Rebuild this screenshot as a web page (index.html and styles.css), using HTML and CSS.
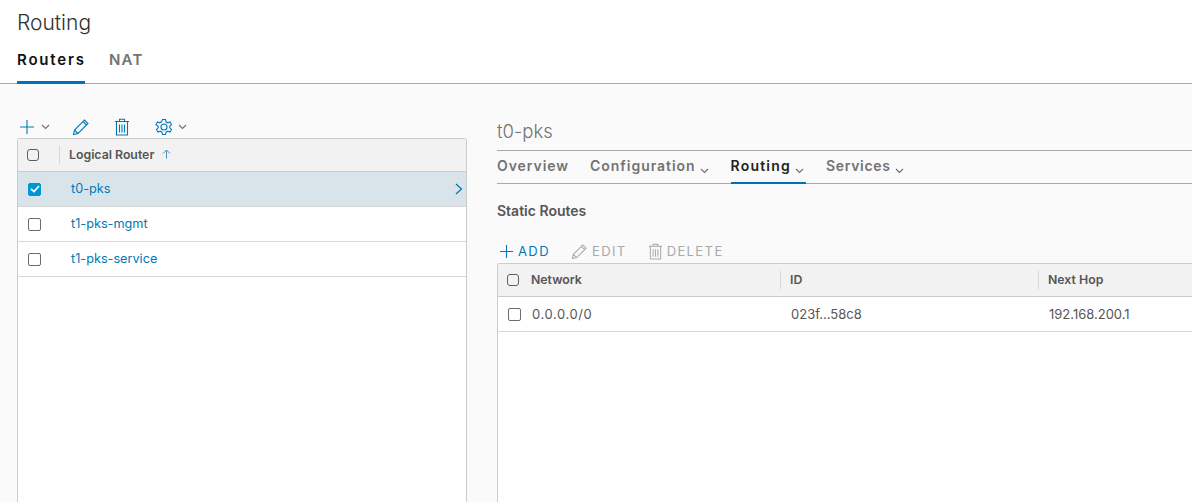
FILE: index.html
```html
<!DOCTYPE html>
<html lang="en">
<head>
    <meta charset="UTF-8">
    <title>Routing</title>
    <link rel="stylesheet" href="styles.css">
</head>
<body>

<header class="page-head">
    <h1>Routing</h1>
    <nav class="main-tabs">
        <a class="main-tab active">Routers</a>
        <a class="main-tab">NAT</a>
    </nav>
</header>

<main class="content">
    <section class="left">
        <div class="icon-bar">
            <svg class="ic-plus" width="16" height="16" viewBox="0 0 16 16"><path d="M8 1v14M1 8h14"/></svg>
            <svg class="chev" width="9" height="6" viewBox="0 0 9 6"><path d="M1 1l3.500 3.500L8 1"/></svg>
            <svg class="ic ic-pencil" width="18" height="18" viewBox="0 0 18 18"><path d="M1.500 16.500l1-4.500L12.500 2l3.500 3.500L6 15.500zM2.500 12l3.500 3.500M11 3.500l3.500 3.500"/></svg>
            <svg class="ic ic-trash" width="16" height="18" viewBox="0 0 16 18"><path d="M1 3.500h14M5.500 3V1.200h5V3M2.500 3.500V17h11V3.500M5.500 6.500v8M8 6.500v8M10.500 6.500v8"/></svg>
            <svg class="ic ic-gear" width="18" height="18" viewBox="0 0 18 18"><circle cx="9" cy="9" r="3"/><path d="M7.500 1.500h3l.5 2.300 1.800 1 2.200-.8 1.500 2.600-1.700 1.600v1.600l1.700 1.600-1.500 2.600-2.200-.8-1.800 1-.5 2.300h-3l-.5-2.300-1.800-1-2.200.8-1.500-2.600 1.700-1.600V8.200L1 6.600l1.500-2.600 2.200.8 1.800-1z"/></svg>
            <svg class="chev" width="9" height="6" viewBox="0 0 9 6"><path d="M1 1l3.500 3.500L8 1"/></svg>
        </div>
        <div class="grid router-grid">
            <div class="grid-head">
                <span class="box head-box"></span>
                <span class="col-title first-title">Logical Router <svg class="sort" width="9" height="10" viewBox="0 0 9 10"><path d="M4.500 9.500V1M1 4.500L4.500 1 8 4.500"/></svg></span>
            </div>
            <div class="router-row selected">
                <span class="box checked"><svg width="10" height="8" viewBox="0 0 10 8"><path d="M1 4l3 2.500L9 1"/></svg></span>
                <a class="router-name">t0-pks</a>
                <svg class="row-arrow" width="8" height="12" viewBox="0 0 8 12"><path d="M1 1l5.500 5L1 11"/></svg>
            </div>
            <div class="router-row">
                <span class="box"></span>
                <a class="router-name">t1-pks-mgmt</a>
            </div>
            <div class="router-row">
                <span class="box"></span>
                <a class="router-name">t1-pks-service</a>
            </div>
        </div>
    </section>

    <section class="right">
        <h2 class="detail-title">t0-pks</h2>
        <nav class="sub-tabs">
            <a class="sub-tab">Overview</a>
            <a class="sub-tab">Configuration<svg class="chev" width="9" height="6" viewBox="0 0 9 6"><path d="M1 1l3.500 3.500L8 1"/></svg></a>
            <a class="sub-tab active">Routing<svg class="chev" width="9" height="6" viewBox="0 0 9 6"><path d="M1 1l3.500 3.500L8 1"/></svg></a>
            <a class="sub-tab services">Services<svg class="chev" width="9" height="6" viewBox="0 0 9 6"><path d="M1 1l3.500 3.500L8 1"/></svg></a>
        </nav>
        <h3 class="section-title">Static Routes</h3>
        <div class="action-bar">
            <a class="action add"><svg width="15" height="15" viewBox="0 0 15 15"><path d="M7.500 1v13M1 7.500h13"/></svg>ADD</a>
            <a class="action off"><svg width="17" height="17" viewBox="0 0 18 18"><path d="M1.500 16.500l1-4.500L12.500 2l3.500 3.500L6 15.500zM2.500 12l3.500 3.500M11 3.500l3.500 3.500"/></svg>EDIT</a>
            <a class="action off"><svg width="15" height="17" viewBox="0 0 16 18"><path d="M1 3.500h14M5.500 3V1.200h5V3M2.500 3.500V17h11V3.500M5.500 6.500v8M8 6.500v8M10.500 6.500v8"/></svg>DELETE</a>
        </div>
        <div class="grid route-grid">
            <div class="grid-head route-cols">
                <span class="cell-check"><span class="box head-box"></span></span>
                <span class="col-title">Network</span>
                <span class="col-title sep">ID</span>
                <span class="col-title sep">Next Hop</span>
            </div>
            <div class="route-row route-cols">
                <span class="cell-check"><span class="box"></span></span>
                <span class="route-cell network-cell">0.0.0.0/0</span>
                <span class="route-cell">023f...58c8</span>
                <span class="route-cell">192.168.200.1</span>
            </div>
        </div>
    </section>
</main>

</body>
</html>
```

FILE: styles.css
```css
html, body {
    height: 100%;
}
body {
    margin: 0;
    font-family: Inter, "Open Sans", sans-serif;
    background-color: #fafafa;
    color: #565656;
    overflow: hidden;
    display: flex;
    flex-direction: column;
}
svg {
    fill: none;
    display: block;
    flex: none;
}

/* page header */
.page-head {
    background-color: #fff;
    border-bottom: 1px solid #a9a9a9;
    padding: 11px 0 0 17px;
    height: 72px;
    flex: none;
}
h1 {
    margin: 0;
    font-size: 21px;
    line-height: 24px;
    font-weight: 300;
    color: #313131;
}
.main-tabs {
    display: flex;
    gap: 24px;
    margin-top: 1px;
}
.main-tab {
    font-size: 15px;
    line-height: 24px;
    font-weight: 600;
    letter-spacing: 1.200px;
    color: #737373;
    height: 33px;
    padding-top: 12px;
}
.main-tab.active {
    color: #111;
    border-bottom: 3px solid #0072bb;
    letter-spacing: 1.800px;
    width: 68px;
}

/* layout */
.content {
    flex: 1;
    min-height: 0;
    display: flex;
    padding-left: 17px;
}
.left {
    width: 450px;
    flex: none;
    margin-right: 30px;
    display: flex;
    flex-direction: column;
}
.right {
    flex: 1;
    min-width: 0;
    display: flex;
    flex-direction: column;
}

/* icon toolbar */
.icon-bar {
    display: flex;
    align-items: center;
    height: 18px;
    margin-top: 34px;
    margin-bottom: 2px;
    padding-left: 2px;
}
.icon-bar path, .icon-bar circle {
    stroke: #0079b8;
    stroke-width: 1.100;
}
.ic-plus {
    margin-right: 6px;
}
.icon-bar .chev {
    margin-right: 22px;
}
.ic-pencil {
    margin-right: 24px;
}
.ic-trash {
    margin-right: 25px;
}
.ic-gear {
    margin-right: 5px;
}
.chev path, .icon-bar .chev path {
    stroke: #6e6e6e;
    stroke-width: 1.100;
}

/* grids */
.grid {
    border: 1px solid #ccc;
    border-bottom: 0;
    background-color: #fff;
    flex: 1;
    border-radius: 3px 3px 0 0;
}
.route-grid {
    border-right: 0;
    border-radius: 3px 0 0 0;
}
.grid-head {
    height: 32px;
    background-color: #f2f2f2;
    border-bottom: 1px solid #ccc;
    display: flex;
    align-items: center;
}
.box {
    display: block;
    width: 11px;
    height: 11px;
    border: 1px solid #6d6a72;
    border-radius: 2px;
    background-color: #fff;
    flex: none;
}
.head-box {
    width: 10px;
    height: 10px;
    border: 1.500px solid #5e5e5e;
    border-radius: 3px;
    background-color: transparent;
}
.checked {
    background-color: #0095d3;
    border-color: #0095d3;
    display: flex;
    align-items: center;
    justify-content: center;
}
.checked path {
    stroke: #fff;
    stroke-width: 1.800;
}
.col-title {
    font-size: 12.300px;
    font-weight: 600;
    color: #565656;
    display: flex;
    align-items: center;
    height: 16px;
    padding-bottom: 2px;
}
.first-title {
    margin-left: 20px;
    padding-left: 9px;
    border-left: 1px solid #d7d7d7;
    gap: 8px;
}
.grid-head > .head-box {
    margin-left: 9px;
}
.sort path {
    stroke: #4d8fb5;
    stroke-width: 1;
}

/* router list */
.router-row {
    height: 34px;
    border-bottom: 1px solid #d7d7d7;
    display: flex;
    align-items: center;
    padding-left: 10px;
}
.router-row.selected {
    background-color: #d9e4ea;
}
.router-name {
    font-size: 12.700px;
    color: #0079b8;
    margin-left: 30px;
    margin-top: -2px;
}
.row-arrow {
    margin-left: auto;
    margin-right: 3px;
}
.row-arrow path {
    stroke: #0079b8;
    stroke-width: 1.300;
}

/* details */
.detail-title {
    margin: 36px 0 0;
    font-size: 18.500px;
    line-height: 22px;
    font-weight: 300;
    color: #737373;
    height: 31px;
    box-sizing: border-box;
    border-bottom: 1px solid #a9a9a9;
}
.sub-tabs {
    display: flex;
    gap: 21px;
    height: 32px;
    border-bottom: 1px solid #a9a9a9;
}
.sub-tab {
    display: flex;
    align-items: center;
    font-size: 14px;
    font-weight: 600;
    letter-spacing: 0.950px;
    color: #737373;
    height: 32px;
    box-sizing: border-box;
    padding-bottom: 4px;
}
.sub-tab .chev {
    margin: 11px 0 0 4px;
}
.sub-tab.active {
    color: #222;
    border-bottom: 2px solid #0072bb;
    height: 33px;
    padding-bottom: 3px;
    padding-right: 2px;
    margin: 0 -1px 0 1px;
    letter-spacing: 1.200px;
}
.sub-tab.services {
    letter-spacing: 0.700px;
}
.section-title {
    margin: 19px 0 0;
    font-size: 14px;
    line-height: 16px;
    font-weight: 600;
    color: #565656;
}
.action-bar {
    display: flex;
    gap: 21px;
    margin-top: 23px;
    height: 21px;
    padding-left: 2px;
}
.action {
    display: flex;
    align-items: center;
    gap: 4px;
    font-size: 13px;
    letter-spacing: 1.400px;
    height: 18px;
}
.action path {
    stroke-width: 1.100;
}
.add {
    color: #0079b8;
}
.add path {
    stroke: #0079b8;
}
.off {
    color: #a9a9a9;
}
.off path {
    stroke: #a9a9a9;
}

/* routes table */
.route-cols {
    display: grid;
    grid-template-columns: 33px 249px 258px 1fr;
    align-items: center;
}
.cell-check {
    padding-left: 9px;
}
.sep {
    border-left: 1px solid #d7d7d7;
    padding-left: 9px;
}
.route-row {
    height: 34px;
    border-bottom: 1px solid #d7d7d7;
}
.route-row .box {
    margin-left: 1px;
}
.route-cell {
    font-size: 13px;
    color: #565656;
    padding-left: 11px;
}
.network-cell {
    padding-left: 1px;
    letter-spacing: 0.600px;
}
```
